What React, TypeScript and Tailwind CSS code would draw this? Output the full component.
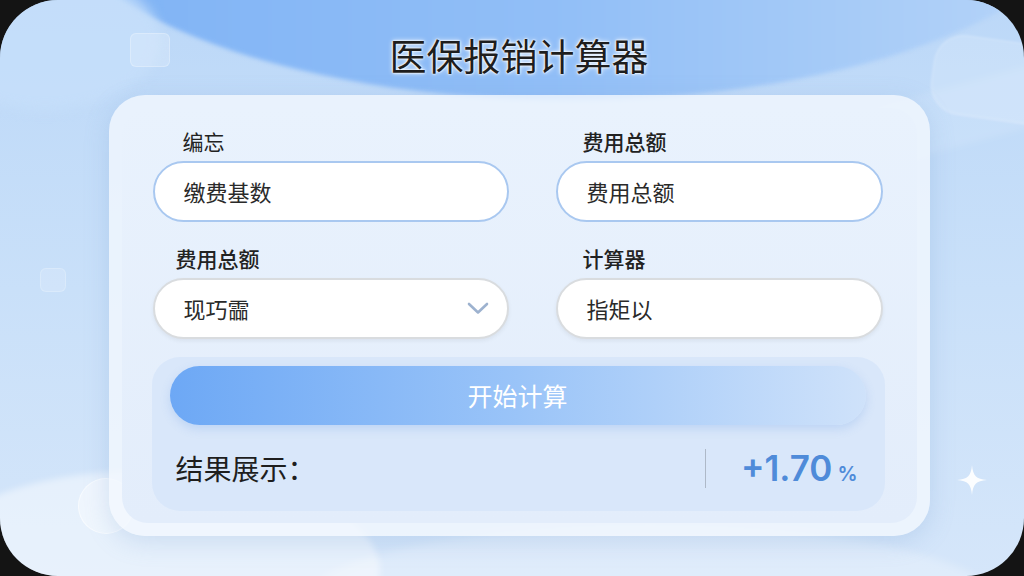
import React from "react";

const cjk = '"Noto Sans CJK SC", "Noto Sans", sans-serif';

function Chevron() {
  return (
    <svg width="22" height="13" viewBox="0 0 22 13" fill="none">
      <path d="M2 2 L11 10.5 L20 2" stroke="#9db2cf" strokeWidth="2.6" strokeLinecap="round" strokeLinejoin="round" />
    </svg>
  );
}

function Sparkle() {
  return (
    <svg width="34" height="34" viewBox="0 0 34 34">
      <path d="M17 2 C18 13 21 16 32 17 C21 18 18 21 17 32 C16 21 13 18 2 17 C13 16 16 13 17 2 Z" fill="#ffffff" fillOpacity="0.9" />
    </svg>
  );
}

export default function App() {
  return (
    <div className="w-[1024px] h-[576px] bg-[#141414] overflow-hidden" style={{ fontFamily: cjk }}>
      <div className="relative w-full h-full rounded-[58px] overflow-hidden bg-gradient-to-b from-[#bcd8f8] via-[#c9e0f9] to-[#d5e6fa]">
        {/* background decorations */}
        <div className="absolute left-[40px] top-[-330px] w-[1060px] h-[430px] rounded-[50%] bg-gradient-to-r from-[#7eb2f5] via-[#92bff7] to-[#b9d6f8] blur-[2px]" />
        <div className="absolute left-[-70px] top-[-30px] w-[230px] h-[140px] rounded-[50%] bg-[#c6defa]/80 blur-[6px]" />
        <div className="absolute left-[130px] top-[33px] w-[40px] h-[34px] rounded-md bg-white/20 border border-white/25" />
        <div className="absolute left-[40px] top-[268px] w-[26px] h-[24px] rounded-md bg-white/15 border border-white/20" />
        <div className="absolute left-[932px] top-[40px] w-[130px] h-[80px] rounded-[30px] bg-white/15 border border-white/25 rotate-[8deg] blur-[1px]" />
        <div className="absolute left-[860px] top-[85px] w-[200px] h-[60px] rounded-[40px] bg-white/10 rotate-[-15deg] blur-[3px]" />
        <div className="absolute left-[-80px] top-[470px] w-[460px] h-[200px] rounded-[50%] bg-white/45 blur-[3px]" />
        <div className="absolute left-[300px] top-[525px] w-[700px] h-[160px] rounded-[50%] bg-white/25 blur-[4px]" />
        <div className="absolute left-[78px] top-[478px] w-[56px] h-[56px] rounded-full bg-white/35 border border-white/50" />
        <div className="absolute left-[955px] top-[463px]">
          <Sparkle />
        </div>

        {/* content */}
        <div className="relative flex flex-col items-center pl-[14px] pt-[31px]">
          <h1 className="text-[37px] leading-[48px] font-normal text-[#1e1e1e] [text-shadow:0_0_2px_#fff,0_0_2px_#fff,0_0_5px_#fff]">
            医保报销计算器
          </h1>

          <div className="mt-[16px] w-[821px] rounded-[36px] bg-[#f3f8fe]/80 p-[13px] shadow-[0_6px_24px_rgba(120,160,210,0.25)]">
            <div className="rounded-[26px] bg-gradient-to-b from-[#e9f2fd] to-[#e3edfb] pl-[31px] pr-[33px] pt-[19px] pb-[12px]">
              <div className="grid grid-cols-[356px_327px] gap-x-[47px]">
                <div className="flex flex-col">
                  <div className="h-[28px] pl-[30px] text-[21px] leading-[28px] font-normal text-[#222]">编忘</div>
                  <div className="mt-[6px] h-[61px] rounded-full bg-white border-2 border-[#a9c8f0] flex items-center pl-[29px] text-[22px] text-[#2a2a2a]">
                    缴费基数
                  </div>
                </div>
                <div className="flex flex-col">
                  <div className="h-[28px] pl-[27px] text-[21px] leading-[28px] font-medium text-[#222]">费用总额</div>
                  <div className="mt-[6px] h-[61px] rounded-full bg-white border-2 border-[#a9c8f0] flex items-center pl-[29px] text-[22px] text-[#2a2a2a]">
                    费用总额
                  </div>
                </div>

                <div className="flex flex-col mt-[22px]">
                  <div className="h-[28px] pl-[23px] text-[21px] leading-[28px] font-medium text-[#222]">费用总额</div>
                  <div className="mt-[6px] h-[61px] rounded-full bg-white border-2 border-[#d9dcdf] shadow-[0_2px_4px_rgba(0,0,0,0.06)] flex items-center justify-between pl-[29px] pr-[18px] text-[22px] text-[#2a2a2a]">
                    <span>现巧霝</span>
                    <Chevron />
                  </div>
                </div>
                <div className="flex flex-col mt-[22px]">
                  <div className="h-[28px] pl-[27px] text-[21px] leading-[28px] font-medium text-[#222]">计算器</div>
                  <div className="mt-[6px] h-[61px] rounded-full bg-white border-2 border-[#d9dcdf] shadow-[0_2px_4px_rgba(0,0,0,0.06)] flex items-center pl-[29px] text-[22px] text-[#2a2a2a]">
                    指矩以
                  </div>
                </div>

                <div className="col-span-2 mt-[18px] -ml-px mr-[-2px] h-[154px] rounded-[28px] bg-[#d9e7fa] pt-[9px] pl-[18px] pr-[19px]">
                  <button className="w-full h-[59px] rounded-full bg-gradient-to-r from-[#6da8f5] via-[#9ac4f8] to-[#cfe2fa] text-white text-[25px] shadow-[0_4px_10px_rgba(110,160,230,0.25)]">
                    开始计算
                  </button>
                  <div className="h-[86px] flex items-center pl-[6px] pr-[8px]">
                    <div className="flex-1 text-[28px] font-normal text-[#1e1e1e]">结果展示：</div>
                    <div className="w-px h-[39px] bg-[#aeb9c8]" />
                    <div className="ml-[35px] flex items-baseline text-[#4f8bd9] font-semibold" style={{ fontFamily: 'Inter, "Noto Sans", sans-serif' }}>
                      <span className="text-[35px] leading-none">+1.70</span>
                      <span className="ml-[5px] text-[20px] leading-none">%</span>
                    </div>
                  </div>
                </div>
              </div>
            </div>
          </div>
        </div>
      </div>
    </div>
  );
}
